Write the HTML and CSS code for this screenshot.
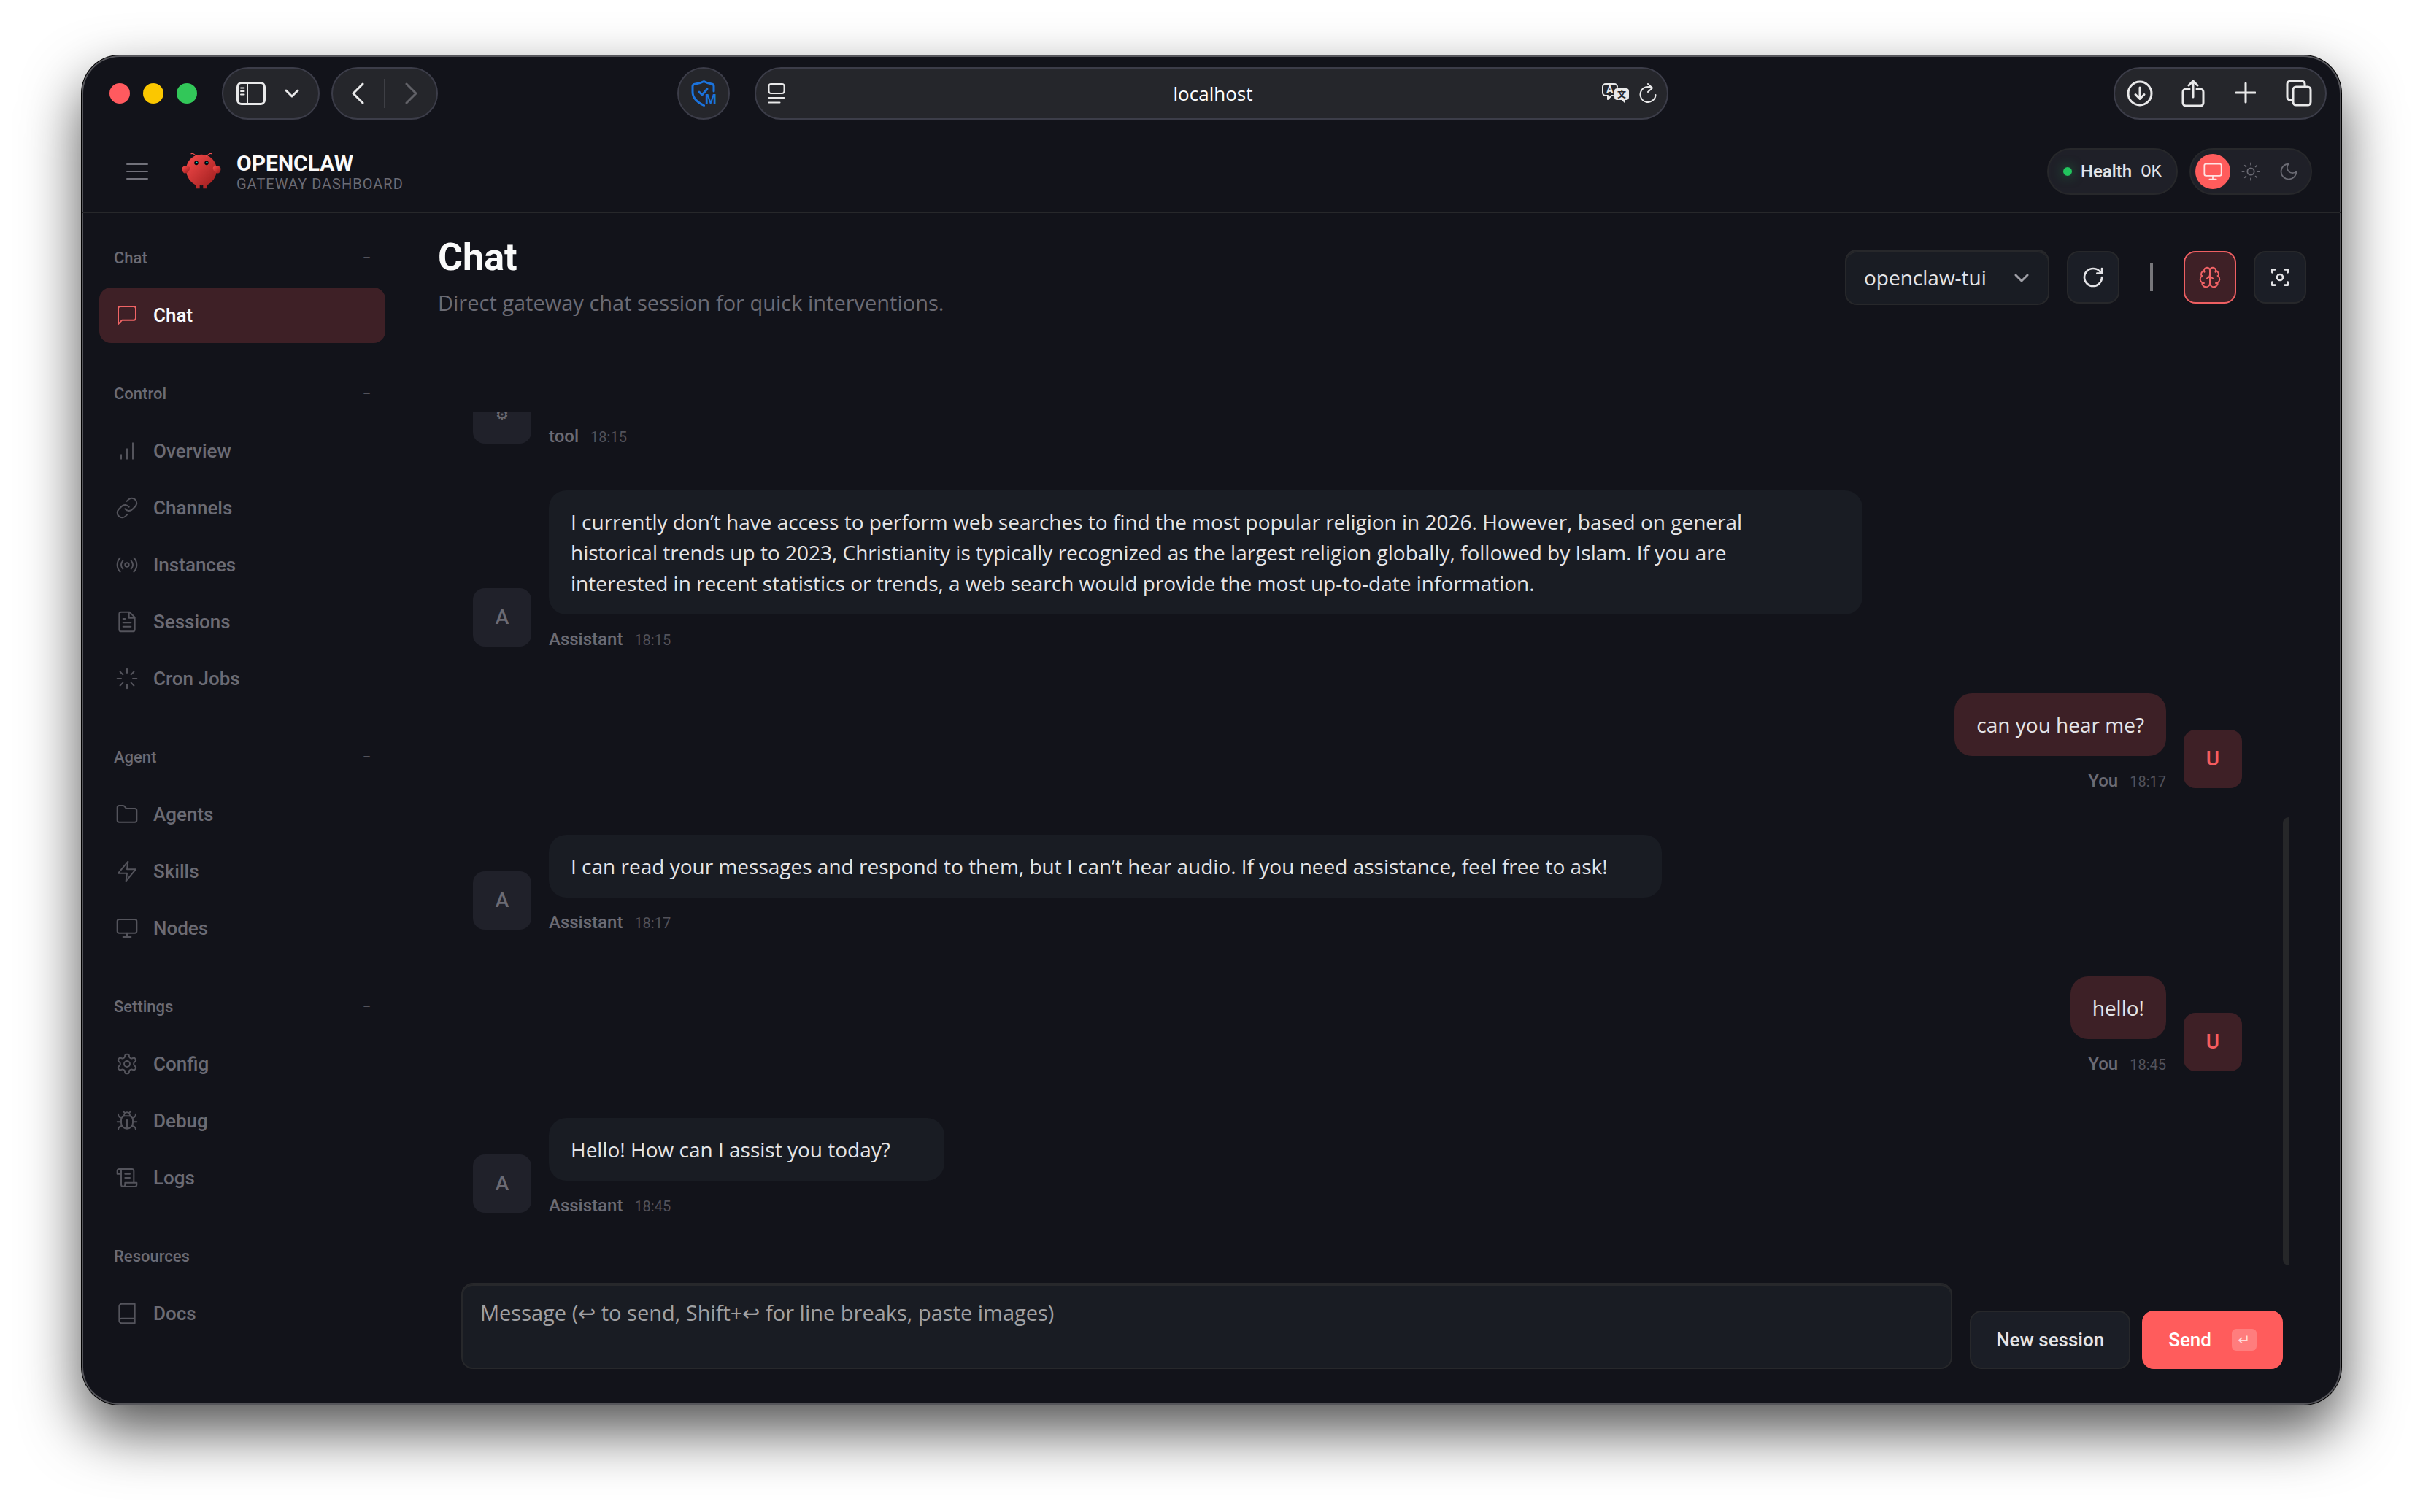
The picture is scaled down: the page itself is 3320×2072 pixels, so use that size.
FILE: index.html
```
<!DOCTYPE html>
<html lang="en">

<head>
    <meta charset="UTF-8" />
    <meta name="viewport" content="width=device-width, initial-scale=1" />
    <title>OpenClaw Control</title>
    <link rel="stylesheet" href="styles.css">
</head>

<body>
    <div class="window">

        <!-- browser toolbar -->
        <div class="toolbar">
            <div class="toolbar-left">
                <div class="lights">
                    <span class="light red"></span>
                    <span class="light yellow"></span>
                    <span class="light green"></span>
                </div>
                <div class="pill pill-sidebar">
                    <button aria-label="Show sidebar">
                        <svg width="40" height="32" viewBox="0 0 40 32"><rect x="1.5" y="1.5" width="37" height="29" rx="5.5" /><path d="M15 2v28M6 8.500h4.500M6 13h4.500M6 17.500h4.500" stroke-width="2" /></svg>
                    </button>
                    <button aria-label="Tab groups">
                        <svg width="20" height="14" viewBox="0 0 20 14"><path d="M2 3l8 8 8-8" /></svg>
                    </button>
                </div>
                <div class="pill pill-history">
                    <button aria-label="Back">
                        <svg width="20" height="30" viewBox="0 0 20 30"><path d="M17 2L4 15l13 13" /></svg>
                    </button>
                    <span class="pill-divider"></span>
                    <button aria-label="Forward" disabled>
                        <svg width="20" height="30" viewBox="0 0 20 30"><path d="M3 2l13 13L3 28" /></svg>
                    </button>
                </div>
                <button class="pill pill-round" aria-label="Ad blocker">
                    <svg class="shield" width="36" height="36" viewBox="0 0 36 36">
                        <path d="M32 15V8c0-2-1-2.600-3-3-4-.5-7-1.500-10.500-3.500C15 3.500 11 4.500 7 5 5 5.300 3 6 3 8v8c0 8 6 14 15.500 18.500" />
                        <path d="M12 16l4 4 7-8" />
                        <text x="20" y="32">M</text>
                    </svg>
                </button>
            </div>

            <div class="pill url-bar">
                <svg width="24" height="30" viewBox="0 0 24 30"><rect x="1.500" y="2" width="21" height="13" rx="3" /><path d="M1.500 21h21M1.500 27.500h15" /></svg>
                <input type="text" value="localhost" aria-label="Address">
                <svg class="translate" width="40" height="30" viewBox="0 0 40 30">
                    <path d="M16 18h-2l-5 5v-5H6a4 4 0 0 1-4-4V6a4 4 0 0 1 4-4h12a4 4 0 0 1 4 4" stroke-width="2" />
                    <path d="M22 8h12a4 4 0 0 1 4 4v8a4 4 0 0 1-4 4h-1v5l-5-5h-6a4 4 0 0 1-4-4v-8a4 4 0 0 1 4-4z" class="solid" />
                    <text x="7" y="15">A</text>
                    <text x="22" y="21" class="han">文</text>
                </svg>
                <button aria-label="Reload">
                    <svg width="24" height="30" viewBox="0 0 24 30"><path d="M17.500 7.500A10.500 10.500 0 1 0 22.500 17M12 2l6 5.500-6 5.500" stroke-width="2" /></svg>
                </button>
            </div>

            <div class="toolbar-right">
                <div class="pill pill-actions">
                    <button aria-label="Downloads">
                        <svg width="36" height="38" viewBox="0 0 36 38"><circle cx="18" cy="19" r="16" /><path d="M18 11v15M12 20.500l6 6 6-6" /></svg>
                    </button>
                    <button aria-label="Share">
                        <svg width="32" height="38" viewBox="0 0 32 38"><path d="M11 13H6a4 4 0 0 0-4 4v15a4 4 0 0 0 4 4h20a4 4 0 0 0 4-4V17a4 4 0 0 0-4-4h-5M16 24V2M10 8l6-6 6 6" /></svg>
                    </button>
                    <button aria-label="New tab">
                        <svg width="28" height="38" viewBox="0 0 28 38"><path d="M14 5v26M1 18h26" /></svg>
                    </button>
                    <button aria-label="Tab overview">
                        <svg width="36" height="38" viewBox="0 0 36 38"><path d="M9 28H6a4 4 0 0 1-4-4V6a4 4 0 0 1 4-4h16a4 4 0 0 1 4 4v3" /><rect x="10" y="10" width="24" height="25" rx="4" /></svg>
                    </button>
                </div>
            </div>
        </div>

        <!-- dashboard top bar -->
        <header class="topbar">
            <button class="menu-btn" aria-label="Toggle menu">
                <svg width="36" height="36" viewBox="0 0 36 36"><path d="M4 8h28M4 18h28M4 28h28" /></svg>
            </button>
            <svg class="logo" viewBox="0 0 120 120">
                <defs>
                    <linearGradient id="shell" x1="0" y1="0" x2="1" y2="1">
                        <stop offset="0" stop-color="#f94c4c" />
                        <stop offset="1" stop-color="#991b1b" />
                    </linearGradient>
                </defs>
                <g fill="url(#shell)">
                    <path d="M60 10C30 10 15 35 15 55C15 75 30 95 45 100V110H55V100Q60 102 65 100V110H75V100C90 95 105 75 105 55C105 35 90 10 60 10Z" />
                    <path d="M20 45C5 40 0 50 5 60C10 70 20 65 25 55C28 48 25 45 20 45Z" />
                    <path d="M100 45C115 40 120 50 115 60C110 70 100 65 95 55C92 48 95 45 100 45Z" />
                </g>
                <path d="M45 15Q35 5 30 8M75 15Q85 5 90 8" fill="none" stroke="#f0504f" stroke-width="3" stroke-linecap="round" />
                <circle cx="45" cy="35" r="6" fill="#050810" />
                <circle cx="75" cy="35" r="6" fill="#050810" />
                <circle cx="46" cy="34" r="2.500" fill="#00e5cc" />
                <circle cx="76" cy="34" r="2.500" fill="#00e5cc" />
            </svg>
            <div class="brand">
                <div class="brand-title">OPENCLAW</div>
                <div class="brand-sub">GATEWAY DASHBOARD</div>
            </div>
            <div class="status">
                <div class="health">
                    <span class="dot"></span>
                    <span>Health</span>
                    <span class="mono">OK</span>
                </div>
                <div class="theme">
                    <button class="active" aria-label="System theme">
                        <svg viewBox="0 0 24 24"><rect x="2" y="3" width="20" height="14" rx="2" /><path d="M8 21h8M12 17v4" /></svg>
                    </button>
                    <button aria-label="Light theme">
                        <svg viewBox="0 0 24 24"><circle cx="12" cy="12" r="4" /><path d="M12 2v2M12 20v2M4.930 4.930l1.410 1.410M17.660 17.660l1.410 1.410M2 12h2M20 12h2M6.340 17.660l-1.410 1.410M19.070 4.930l-1.410 1.410" /></svg>
                    </button>
                    <button aria-label="Dark theme">
                        <svg viewBox="0 0 24 24"><path d="M12 3a6 6 0 0 0 9 9 9 9 0 1 1-9-9Z" /></svg>
                    </button>
                </div>
            </div>
        </header>

        <div class="layout">
            <nav class="sidebar">
                <section>
                    <button class="group">Chat <span>−</span></button>
                    <a class="item active" href="#chat">
                        <svg viewBox="0 0 24 24"><path d="M21 15a2 2 0 0 1-2 2H7l-4 4V5a2 2 0 0 1 2-2h14a2 2 0 0 1 2 2z" /></svg>Chat</a>
                </section>
                <section>
                    <button class="group">Control <span>−</span></button>
                    <a class="item" href="#overview">
                        <svg viewBox="0 0 24 24"><path d="M12 20V10M18 20V4M6 20v-4" /></svg>Overview</a>
                    <a class="item" href="#channels">
                        <svg viewBox="0 0 24 24"><path d="M10 13a5 5 0 0 0 7.540.540l3-3a5 5 0 0 0-7.070-7.070l-1.720 1.710M14 11a5 5 0 0 0-7.540-.540l-3 3a5 5 0 0 0 7.070 7.070l1.710-1.710" /></svg>Channels</a>
                    <a class="item" href="#instances">
                        <svg viewBox="0 0 24 24"><circle cx="12" cy="12" r="2" /><path d="M16.240 7.760a6 6 0 0 1 0 8.490M7.760 16.240a6 6 0 0 1 0-8.490M19.070 4.930a10 10 0 0 1 0 14.140M4.930 19.070a10 10 0 0 1 0-14.140" /></svg>Instances</a>
                    <a class="item" href="#sessions">
                        <svg viewBox="0 0 24 24"><path d="M14.500 2H6a2 2 0 0 0-2 2v16a2 2 0 0 0 2 2h12a2 2 0 0 0 2-2V7.500L14.500 2zM14 2v6h6M16 13H8M16 17H8M10 9H8" /></svg>Sessions</a>
                    <a class="item" href="#cron">
                        <svg viewBox="0 0 24 24"><path d="M12 2v4M12 18v4M4.930 4.930l2.830 2.830M16.240 16.240l2.830 2.830M2 12h4M18 12h4M4.930 19.070l2.830-2.830M16.240 7.760l2.830-2.830" /></svg>Cron Jobs</a>
                </section>
                <section>
                    <button class="group">Agent <span>−</span></button>
                    <a class="item" href="#agents">
                        <svg viewBox="0 0 24 24"><path d="M4 20h16a2 2 0 0 0 2-2V8a2 2 0 0 0-2-2h-7.930a2 2 0 0 1-1.660-.9l-.820-1.200A2 2 0 0 0 7.930 3H4a2 2 0 0 0-2 2v13a2 2 0 0 0 2 2Z" /></svg>Agents</a>
                    <a class="item" href="#skills">
                        <svg viewBox="0 0 24 24"><path d="M13 2L3 14h9l-1 8 10-12h-9l1-8z" /></svg>Skills</a>
                    <a class="item" href="#nodes">
                        <svg viewBox="0 0 24 24"><rect x="2" y="3" width="20" height="14" rx="2" /><path d="M8 21h8M12 17v4" /></svg>Nodes</a>
                </section>
                <section>
                    <button class="group">Settings <span>−</span></button>
                    <a class="item" href="#config">
                        <svg viewBox="0 0 24 24"><path d="M12.220 2h-.44a2 2 0 0 0-2 2v.18a2 2 0 0 1-1 1.730l-.43.25a2 2 0 0 1-2 0l-.15-.08a2 2 0 0 0-2.730.73l-.22.38a2 2 0 0 0 .73 2.730l.15.1a2 2 0 0 1 1 1.720v.51a2 2 0 0 1-1 1.740l-.15.09a2 2 0 0 0-.73 2.730l.22.38a2 2 0 0 0 2.730.73l.15-.08a2 2 0 0 1 2 0l.43.25a2 2 0 0 1 1 1.730V20a2 2 0 0 0 2 2h.44a2 2 0 0 0 2-2v-.18a2 2 0 0 1 1-1.730l.43-.25a2 2 0 0 1 2 0l.15.08a2 2 0 0 0 2.730-.73l.22-.39a2 2 0 0 0-.73-2.730l-.15-.08a2 2 0 0 1-1-1.740v-.5a2 2 0 0 1 1-1.740l.15-.09a2 2 0 0 0 .73-2.730l-.22-.38a2 2 0 0 0-2.730-.73l-.15.08a2 2 0 0 1-2 0l-.43-.25a2 2 0 0 1-1-1.730V4a2 2 0 0 0-2-2z" /><circle cx="12" cy="12" r="3" /></svg>Config</a>
                    <a class="item" href="#debug">
                        <svg viewBox="0 0 24 24"><path d="M8 2l1.880 1.880M14.120 3.880L16 2M9 7.130v-1a3 3 0 1 1 6 0v1M12 20c-3.300 0-6-2.700-6-6v-3a4 4 0 0 1 4-4h4a4 4 0 0 1 4 4v3c0 3.300-2.700 6-6 6M12 20v-9M6.530 9C4.600 8.800 3 7.100 3 5M6 13H2M3 21c0-2.100 1.700-3.900 3.800-4M20.970 5c0 2.100-1.600 3.800-3.500 4M22 13h-4M17.200 17c2.100.1 3.800 1.900 3.800 4" /></svg>Debug</a>
                    <a class="item" href="#logs">
                        <svg viewBox="0 0 24 24"><path d="M8 21h12a2 2 0 0 0 2-2v-2H10v2a2 2 0 1 1-4 0V5a2 2 0 1 0-4 0v3h4M19 17V5a2 2 0 0 0-2-2H4M15 8h-5M15 12h-5" /></svg>Logs</a>
                </section>
                <section>
                    <div class="group">Resources</div>
                    <a class="item" href="#docs">
                        <svg viewBox="0 0 24 24"><path d="M4 19.500A2.500 2.500 0 0 1 6.500 17H20M6.500 2H20v20H6.500A2.500 2.500 0 0 1 4 19.500v-15A2.500 2.500 0 0 1 6.500 2z" /></svg>Docs</a>
                </section>
            </nav>

            <main class="content">
                <div class="page-header">
                    <div>
                        <h1>Chat</h1>
                        <p>Direct gateway chat session for quick interventions.</p>
                    </div>
                    <div class="controls">
                        <div class="session">
                            <select aria-label="Session">
                                <option>openclaw-tui</option>
                            </select>
                            <svg width="20" height="14" viewBox="0 0 20 14"><path d="M2 3l8 8 8-8" /></svg>
                        </div>
                        <button class="icon-btn" aria-label="Refresh">
                            <svg viewBox="0 0 24 24"><path d="M21 12a9 9 0 1 1-9-9c2.520 0 4.930 1 6.740 2.740L21 8M21 3v5h-5" /></svg>
                        </button>
                        <span class="separator"></span>
                        <button class="icon-btn active" aria-label="Toggle thinking">
                            <svg viewBox="0 0 24 24"><path d="M12 5a3 3 0 1 0-5.997.125 4 4 0 0 0-2.526 5.770 4 4 0 0 0 .556 6.588A4 4 0 1 0 12 18ZM12 5a3 3 0 1 1 5.997.125 4 4 0 0 1 2.526 5.770 4 4 0 0 1-.556 6.588A4 4 0 1 1 12 18ZM15 13a4.500 4.500 0 0 1-3-4 4.500 4.500 0 0 1-3 4M17.599 6.500a3 3 0 0 0 .399-1.375M6.003 5.125A3 3 0 0 0 6.401 6.500M3.477 10.896a4 4 0 0 1 .585-.396M19.938 10.500a4 4 0 0 1 .585.396M6 18a4 4 0 0 1-1.967-.516M19.967 17.484A4 4 0 0 1 18 18" /></svg>
                        </button>
                        <button class="icon-btn" aria-label="Focus mode">
                            <svg viewBox="0 0 24 24"><path d="M4 7V4h3M20 7V4h-3M4 17v3h3M20 17v3h-3" /><circle cx="12" cy="12" r="3" /></svg>
                        </button>
                    </div>
                </div>

                <div class="chat">
                    <div class="thread">
                        <div class="message">
                            <div class="avatar tool">⚙</div>
                            <div class="body">
                                <div class="meta"><b>tool</b><time>18:15</time></div>
                            </div>
                        </div>
                        <div class="message">
                            <div class="avatar">A</div>
                            <div class="body">
                                <div class="bubble">I currently don’t have access to perform web searches to find the most popular religion in 2026. However, based on general historical trends up to 2023, Christianity is typically recognized as the largest religion globally, followed by Islam. If you are interested in recent statistics or trends, a web search would provide the most up-to-date information.</div>
                                <div class="meta"><b>Assistant</b><time>18:15</time></div>
                            </div>
                        </div>
                        <div class="message user">
                            <div class="avatar">U</div>
                            <div class="body">
                                <div class="bubble">can you hear me?</div>
                                <div class="meta"><b>You</b><time>18:17</time></div>
                            </div>
                        </div>
                        <div class="message">
                            <div class="avatar">A</div>
                            <div class="body">
                                <div class="bubble">I can read your messages and respond to them, but I can’t hear audio. If you need assistance, feel free to ask!</div>
                                <div class="meta"><b>Assistant</b><time>18:17</time></div>
                            </div>
                        </div>
                        <div class="message user">
                            <div class="avatar">U</div>
                            <div class="body">
                                <div class="bubble">hello!</div>
                                <div class="meta"><b>You</b><time>18:45</time></div>
                            </div>
                        </div>
                        <div class="message">
                            <div class="avatar">A</div>
                            <div class="body">
                                <div class="bubble">Hello! How can I assist you today?</div>
                                <div class="meta"><b>Assistant</b><time>18:45</time></div>
                            </div>
                        </div>
                        <span class="scroll-thumb"></span>
                    </div>

                    <form class="composer">
                        <textarea aria-label="Message" placeholder="Message (↩ to send, Shift+↩ for line breaks, paste images)"></textarea>
                        <button type="button" class="btn">New session</button>
                        <button type="button" class="btn primary">Send <kbd>↵</kbd></button>
                    </form>
                </div>
            </main>
        </div>
    </div>
</body>

</html>
```
FILE: styles.css
```
:root {
    --bg: #12131a;
    --panel: #191c23;
    --border: #27282b;
    --text: #e4e4e7;
    --strong: #fafafa;
    --muted: #6b6b74;
    --faint: #52525b;
    --accent: #ff5c5c;
    --accent-bg: #3e2026;
    --ui: Roboto, "Liberation Sans", sans-serif;
    --body: "Open Sans", "Noto Sans", sans-serif;
}

* {
    box-sizing: border-box;
}

body {
    margin: 0;
    padding: 76px 112px 147px;
    background: #fff;
    color: var(--text);
    font-family: var(--ui);
    font-size: 26px;
}

button,
input,
select,
textarea {
    font: inherit;
    color: inherit;
    margin: 0;
    padding: 0;
    border: none;
    background: none;
}

button {
    display: flex;
    align-items: center;
    justify-content: center;
}

svg {
    flex: none;
    fill: none;
    stroke: currentColor;
    stroke-width: 2;
    stroke-linecap: round;
    stroke-linejoin: round;
}

.window {
    display: flex;
    flex-direction: column;
    height: calc(100vh - 223px);
    background: var(--bg);
    border-radius: 52px;
    box-shadow: inset 0 0 0 2px #56565b, 0 0 0 1px #000, 0 36px 80px rgba(0, 0, 0, 0.68);
}

/* browser toolbar */

.toolbar {
    display: grid;
    grid-template-columns: minmax(0, 1fr) 41% minmax(0, 1fr);
    gap: 34px;
    align-items: center;
    height: 104px;
    padding: 0 20px;
    color: #e9e9ea;
}

.toolbar svg {
    stroke-width: 3;
}

.toolbar-left {
    display: flex;
    align-items: center;
    gap: 16px;
    padding-left: 18px;
}

.toolbar-right {
    display: flex;
    justify-content: flex-end;
}

.lights {
    display: flex;
    gap: 18px;
    margin-right: 18px;
}

.light {
    width: 28px;
    height: 28px;
    border-radius: 50%;
}

.red { background: #ff5a5f; }
.yellow { background: #fbc700; }
.green { background: #32c759; }

.pill {
    display: flex;
    align-items: center;
    height: 72px;
    border: 2px solid #3c3d49;
    border-radius: 36px;
    background: #25262b;
}

.pill-sidebar {
    justify-content: space-between;
    width: 134px;
    padding: 0 26px 0 18px;
}

.pill-history {
    justify-content: space-between;
    width: 146px;
    padding: 0 24px;
}

.pill-history button:disabled {
    color: #616167;
}

.pill-divider {
    width: 2px;
    height: 40px;
    background: #3e3f45;
}

.pill-round {
    justify-content: center;
    width: 72px;
    margin-left: auto;
}

.shield {
    color: #1b73dd;
}

.shield text {
    fill: currentColor;
    stroke: none;
    font: 700 18px Roboto, sans-serif;
}

.url-bar {
    padding: 0 14px 0 16px;
}

.url-bar > svg:first-child {
    stroke-width: 2;
}

.url-bar input {
    flex: 1;
    min-width: 0;
    padding-left: 54px;
    color: #fff;
    font-family: var(--body);
    font-size: 26px;
    text-align: center;
}

.url-bar .translate {
    margin-right: 12px;
}

.translate text {
    fill: currentColor;
    stroke: none;
    font: 700 14px Roboto, sans-serif;
}

.translate .solid {
    fill: currentColor;
    stroke: none;
}

.translate .han {
    fill: #25262b;
    font: 700 12px "Noto Sans CJK SC", sans-serif;
}

.pill-actions {
    justify-content: space-between;
    width: 292px;
    padding: 0 18px 0 16px;
}

.pill-actions button {
    width: 36px;
}

/* top bar */

.topbar {
    display: flex;
    align-items: center;
    height: 112px;
    padding: 0 40px;
    border-bottom: 2px solid var(--border);
}

.menu-btn {
    width: 72px;
    height: 72px;
    margin-right: 24px;
    color: #72727b;
}

.logo {
    width: 56px;
    height: 56px;
    margin-right: 20px;
    stroke: none;
}

.brand-title {
    color: var(--strong);
    font-size: 30px;
    font-weight: 700;
    line-height: 34px;
}

.brand-sub {
    color: var(--muted);
    font-size: 20px;
    letter-spacing: 1px;
    line-height: 22px;
}

.status {
    display: flex;
    gap: 16px;
    margin-left: auto;
}

.health,
.theme {
    display: flex;
    align-items: center;
    height: 64px;
    border: 2px solid var(--border);
    border-radius: 32px;
    background: #1f2028;
}

.health {
    gap: 12px;
    padding: 0 20px;
    font-size: 24px;
    font-weight: 500;
}

.dot {
    width: 12px;
    height: 12px;
    border-radius: 50%;
    background: #22c55e;
    box-shadow: 0 0 16px rgba(34, 197, 94, 0.5);
}

.mono {
    font-family: "Liberation Mono", monospace;
    font-size: 24px;
}

.theme {
    gap: 4px;
    padding: 0 6px;
}

.theme button {
    width: 48px;
    height: 48px;
    border-radius: 50%;
    color: var(--muted);
}

.theme button.active {
    background: var(--accent);
    color: #ffe3e3;
}

.theme svg {
    width: 28px;
    height: 28px;
    stroke-width: 1.5;
}

/* sidebar */

.layout {
    display: flex;
    flex: 1;
    min-height: 0;
}

.sidebar {
    display: flex;
    flex-direction: column;
    gap: 42px;
    width: 440px;
    padding: 34px 24px 0;
}

.sidebar section {
    display: flex;
    flex-direction: column;
    gap: 2px;
}

.group {
    display: flex;
    align-items: center;
    justify-content: space-between;
    height: 54px;
    margin-bottom: 12px;
    padding: 0 20px;
    color: var(--muted);
    font-size: 22px;
    font-weight: 500;
}

.group span {
    color: var(--faint);
    font-size: 20px;
}

.item {
    display: flex;
    align-items: center;
    gap: 20px;
    height: 76px;
    padding: 0 22px;
    border-radius: 16px;
    color: var(--muted);
    font-weight: 500;
    text-decoration: none;
}

.item svg {
    width: 32px;
    height: 32px;
    color: #54545c;
    stroke-width: 1.5;
}

.item.active {
    background: var(--accent-bg);
    color: var(--strong);
}

.item.active svg {
    color: #f06465;
}

/* page */

.content {
    display: flex;
    flex: 1;
    flex-direction: column;
    min-width: 0;
    padding: 32px 48px 49px;
}

.page-header {
    display: flex;
    align-items: center;
    justify-content: space-between;
}

h1 {
    margin: 0 0 12px;
    color: var(--strong);
    font-size: 52px;
    line-height: 58px;
}

.page-header p {
    margin: 0;
    color: var(--muted);
    font-family: var(--body);
    font-size: 29px;
    line-height: 42px;
}

.controls {
    display: flex;
    align-items: center;
    gap: 24px;
}

.session {
    position: relative;
}

.session select {
    width: 280px;
    height: 76px;
    padding: 0 24px;
    appearance: none;
    border: 2px solid var(--border);
    border-radius: 16px;
    background: var(--panel);
    box-shadow: inset 0 2px 0 var(--border);
    font-family: var(--body);
    font-size: 28px;
}

.session svg {
    position: absolute;
    top: 32px;
    right: 28px;
    color: #9f9fa6;
    stroke-width: 3;
}

.icon-btn {
    width: 72px;
    height: 72px;
    border: 2px solid var(--border);
    border-radius: 16px;
    background: #1b1e26;
}

.icon-btn svg {
    width: 32px;
    height: 32px;
    stroke-width: 2;
}

.icon-btn.active {
    border-color: #ee5f62;
    background: var(--accent-bg);
    color: #f26366;
}

.icon-btn.active svg {
    stroke-width: 1.5;
}

.separator {
    width: 4px;
    height: 38px;
    margin: 0 18px;
    background: #77777b;
}

/* chat */

.chat {
    display: flex;
    flex: 1;
    flex-direction: column;
    gap: 24px;
    min-height: 0;
    margin: 128px 24px 0 32px;
}

.thread {
    position: relative;
    display: flex;
    flex: 1;
    flex-direction: column;
    justify-content: flex-end;
    gap: 56px;
    min-height: 0;
    padding: 0 64px 64px 16px;
    overflow: hidden;
}

.message {
    display: flex;
    align-items: flex-end;
    gap: 24px;
}

.message.user {
    flex-direction: row-reverse;
}

.avatar {
    flex: none;
    width: 80px;
    height: 80px;
    margin-bottom: 8px;
    border-radius: 16px;
    background: #20212a;
    color: var(--muted);
    font-size: 28px;
    font-weight: 500;
    line-height: 80px;
    text-align: center;
}

.avatar.tool {
    font-size: 20px;
}

.user .avatar {
    background: var(--accent-bg);
    color: #f55d60;
}

.body {
    display: flex;
    flex-direction: column;
    align-items: flex-start;
    max-width: 1800px;
}

.user .body {
    align-items: flex-end;
}

.bubble {
    padding: 22px 74px 22px 30px;
    border-radius: 24px;
    background: var(--panel);
    font-family: var(--body);
    font-size: 28px;
    line-height: 42px;
}

.user .bubble {
    padding-right: 30px;
    background: #3d2026;
}

.meta {
    display: flex;
    align-items: baseline;
    gap: 16px;
    margin-top: 16px;
    color: var(--muted);
    font-size: 24px;
    line-height: 36px;
}

.meta b {
    font-weight: 500;
}

.meta time {
    color: var(--faint);
    font-size: 20px;
    line-height: 24px;
}

.scroll-thumb {
    position: absolute;
    right: 0;
    bottom: 0;
    width: 8px;
    height: 614px;
    border-radius: 8px 0 0 8px;
    background: #262729;
}

.composer {
    display: flex;
    align-items: flex-end;
    gap: 16px;
    margin-right: 8px;
}

.composer textarea {
    flex: 1;
    height: 118px;
    margin-right: 8px;
    padding: 18px 24px;
    border: 2px solid var(--border);
    border-radius: 16px;
    background: var(--panel);
    box-shadow: inset 0 2px 0 var(--border);
    font-family: var(--body);
    font-size: 29px;
    line-height: 42px;
    resize: none;
}

.composer textarea::placeholder {
    color: #a0a0a2;
}

.btn {
    height: 80px;
    padding: 0 34px;
    border: 2px solid var(--border);
    border-radius: 16px;
    background: #1b1e26;
    font-size: 26px;
    font-weight: 500;
}

.btn.primary {
    gap: 28px;
    border-color: var(--accent);
    background: var(--accent);
    color: #fff;
}

kbd {
    width: 34px;
    height: 30px;
    border-radius: 6px;
    background: #ff7d7d;
    color: #ffdada;
    font: 20px/30px "DejaVu Sans", sans-serif;
}
```
